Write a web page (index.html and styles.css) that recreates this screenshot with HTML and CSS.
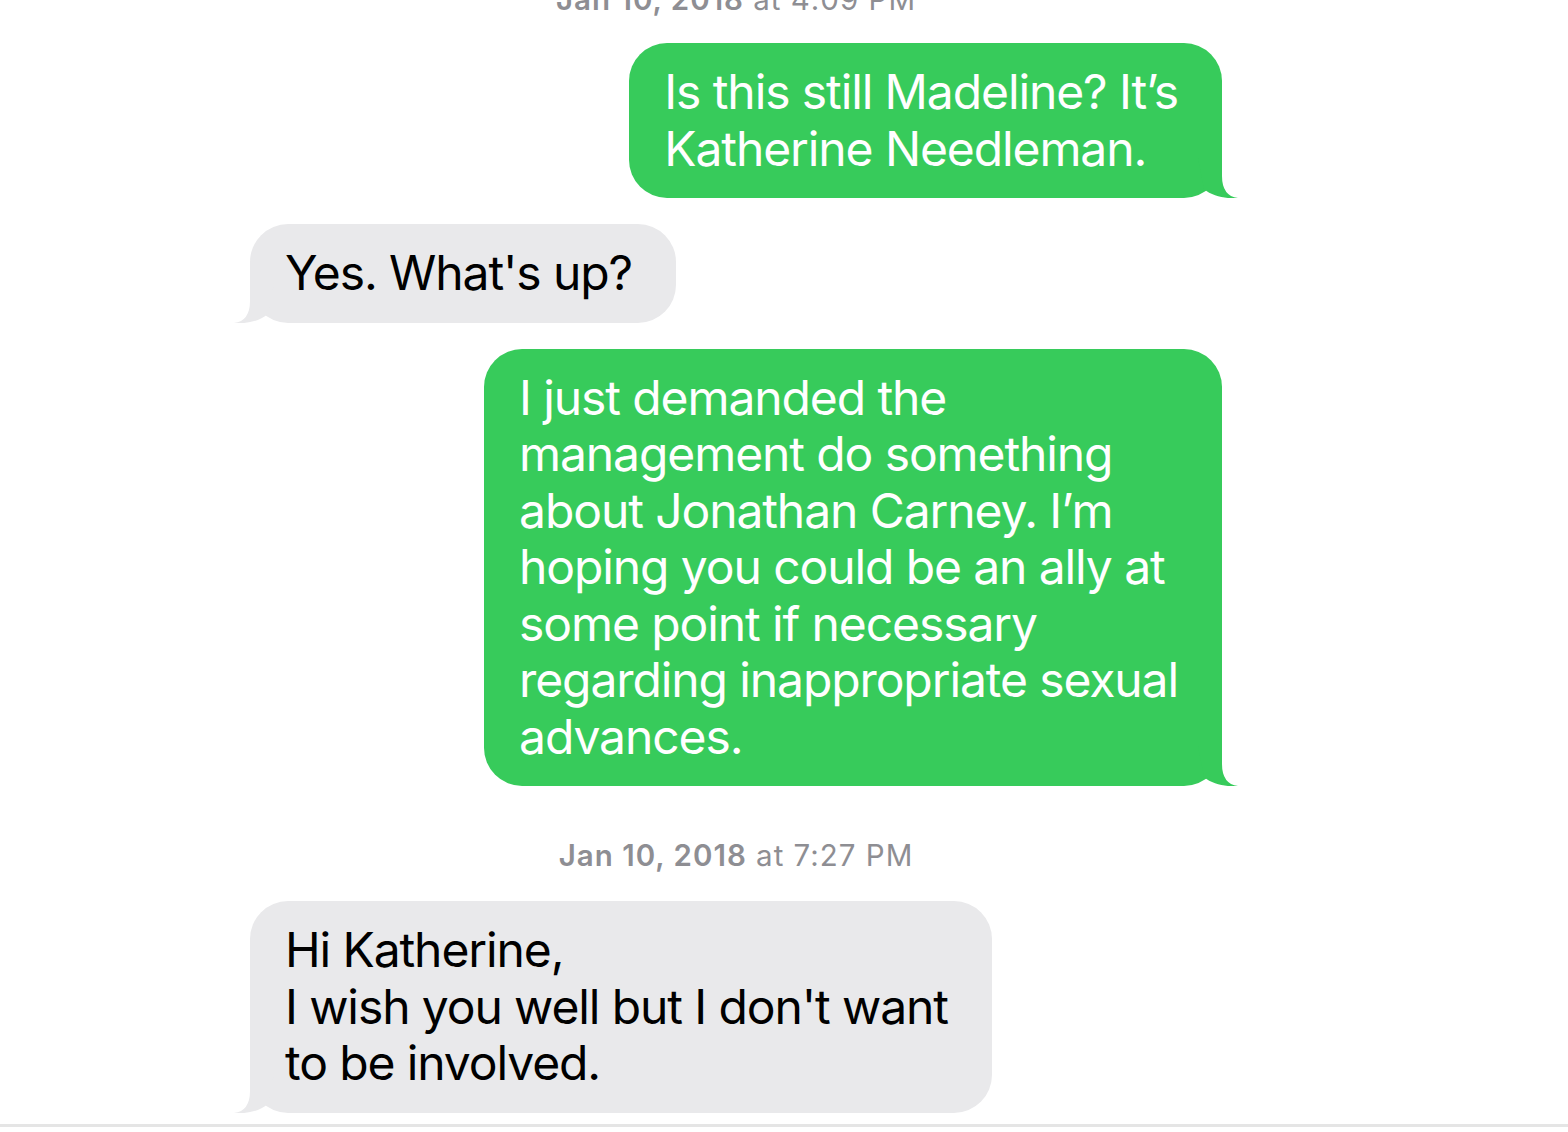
FILE: index.html
```html
<!DOCTYPE html>
<html lang="en">
<head>
    <meta charset="UTF-8">
    <meta name="viewport" content="width=device-width, initial-scale=1.0">
    <title>Messages</title>
    <link rel="stylesheet" href="styles.css">
</head>
<body>
    <div class="thread">
        <p class="stamp first"><b>Jan 10, 2018</b> at 4:09 PM</p>

        <div class="bubble sent">
            <p>Is this still Madeline? It’s<br>Katherine Needleman.</p>
            <svg class="tail" viewBox="0 0 40 40"><path d="M0,0 L24,0 L24,18 Q24,38 40,40 C30,41 15,39 6,31 L0,0 Z"/></svg>
        </div>

        <div class="bubble received">
            <p>Yes. What's up?</p>
            <svg class="tail" viewBox="0 0 40 40"><path d="M0,0 L24,0 L24,18 Q24,38 40,40 C30,41 15,39 6,31 L0,0 Z"/></svg>
        </div>

        <div class="bubble sent">
            <p>I just demanded the<br>management do something<br>about Jonathan Carney. I’m<br>hoping you could be an ally at<br>some point if necessary<br>regarding inappropriate sexual<br>advances.</p>
            <svg class="tail" viewBox="0 0 40 40"><path d="M0,0 L24,0 L24,18 Q24,38 40,40 C30,41 15,39 6,31 L0,0 Z"/></svg>
        </div>

        <p class="stamp"><b>Jan 10, 2018</b> at 7:27 PM</p>

        <div class="bubble received">
            <p>Hi Katherine,<br>I wish you well but I don't want<br>to be involved.</p>
            <svg class="tail" viewBox="0 0 40 40"><path d="M0,0 L24,0 L24,18 Q24,38 40,40 C30,41 15,39 6,31 L0,0 Z"/></svg>
        </div>
    </div>
    <div class="bottom-line"></div>
</body>
</html>
```

FILE: styles.css
```css
* {
    margin: 0;
    padding: 0;
    box-sizing: border-box;
}

body {
    background: #ffffff;
    font-family: "Inter", "Roboto", sans-serif;
    overflow: hidden;
    height: 1132px;
}

.thread {
    display: flex;
    flex-direction: column;
    gap: 26px;
    width: 972px;
    margin-left: 250px;
}

/* Timestamps */
.stamp {
    align-self: center;
    font-size: 29.5px;
    line-height: 36px;
    letter-spacing: 1px;
    color: #8e8e93;
    white-space: nowrap;
    margin-top: 25px;
    margin-bottom: 2px;
}

.stamp b {
    font-weight: 600;
}

.stamp.first {
    margin-top: -19px;
    margin-bottom: 0;
}

/* Bubbles */
.bubble {
    position: relative;
    padding: 21px 44px 21px 35px;
    border-radius: 38px;
    font-size: 48px;
    line-height: 56.5px;
    letter-spacing: -1.1px;
    white-space: nowrap;
}

.bubble p {
    position: relative;
    z-index: 1;
}

.sent {
    align-self: flex-end;
    background: #37cb5b;
    color: #ffffff;
}

.received {
    align-self: flex-start;
    background: #e9e9eb;
    color: #000000;
}

.tail {
    position: absolute;
    bottom: 0;
    width: 40px;
    height: 40px;
}

.sent .tail {
    right: -16px;
    fill: #37cb5b;
}

.received .tail {
    left: -16px;
    fill: #e9e9eb;
    transform: scaleX(-1);
}

.bottom-line {
    height: 3px;
    margin-top: 11px;
    background: #e5e5e5;
}
```
